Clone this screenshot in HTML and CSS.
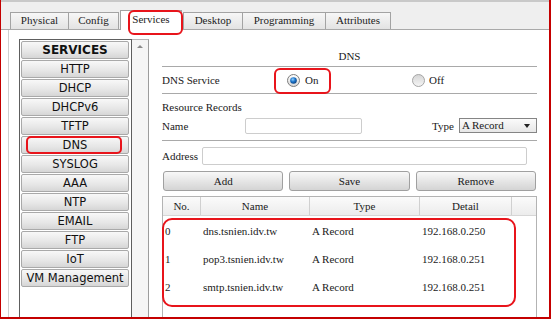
FILE: index.html
```html
<!DOCTYPE html>
<html>
<head>
    <title>DNS Services</title>
    <link rel="stylesheet" href="styles.css">
</head>
<body>
    <div class="window">
        <div class="topline"></div>
        <div class="tabs">
            <div class="tab tab-physical">Physical</div>
            <div class="tab tab-config">Config</div>
            <div class="tab tab-services active">Services</div>
            <div class="tab tab-desktop">Desktop</div>
            <div class="tab tab-programming">Programming</div>
            <div class="tab tab-attributes">Attributes</div>
        </div>

        <div class="main">
            <div class="sidebar">
                <div class="list">
                    <div class="svc head">SERVICES</div>
                    <div class="svc">HTTP</div>
                    <div class="svc">DHCP</div>
                    <div class="svc">DHCPv6</div>
                    <div class="svc">TFTP</div>
                    <div class="svc">DNS</div>
                    <div class="svc">SYSLOG</div>
                    <div class="svc">AAA</div>
                    <div class="svc">NTP</div>
                    <div class="svc">EMAIL</div>
                    <div class="svc">FTP</div>
                    <div class="svc">IoT</div>
                    <div class="svc">VM Management</div>
                </div>
                <div class="scroll"><span class="arrow-up"></span></div>
            </div>

            <div class="content">
                <div class="title">DNS</div>

                <div class="service-row">
                    <span class="label">DNS Service</span>
                    <span class="radio-opt">
                        <svg class="radio" width="13" height="13" viewBox="0 0 13 13">
                            <defs>
                                <linearGradient id="ring" x1="0" y1="0" x2="0" y2="1">
                                    <stop offset="0" stop-color="#ffffff"/>
                                    <stop offset="1" stop-color="#d8d8d8"/>
                                </linearGradient>
                                <radialGradient id="dot" cx="0.4" cy="0.35" r="0.7">
                                    <stop offset="0" stop-color="#8fd0ff"/>
                                    <stop offset="0.5" stop-color="#1b73c9"/>
                                    <stop offset="1" stop-color="#0b3f7c"/>
                                </radialGradient>
                            </defs>
                            <circle cx="6.5" cy="6.5" r="6" fill="url(#ring)" stroke="#7d7d7d"/>
                            <circle cx="6.5" cy="6.5" r="3.3" fill="url(#dot)"/>
                        </svg>
                        On
                    </span>
                    <span class="radio-opt off">
                        <svg class="radio" width="13" height="13" viewBox="0 0 13 13">
                            <defs>
                                <linearGradient id="ringoff" x1="0" y1="0" x2="0" y2="1">
                                    <stop offset="0" stop-color="#d4d4d4"/>
                                    <stop offset="1" stop-color="#f6f6f6"/>
                                </linearGradient>
                            </defs>
                            <circle cx="6.5" cy="6.5" r="6" fill="url(#ringoff)" stroke="#a5a5a5"/>
                        </svg>
                        Off
                    </span>
                </div>

                <div class="records-label">Resource Records</div>

                <div class="name-row">
                    <span class="label name-label">Name</span>
                    <div class="input name-input"></div>
                    <span class="type-label">Type</span>
                    <div class="select">A Record<span class="caret"></span></div>
                </div>

                <div class="address-row">
                    <span class="address-label">Address</span>
                    <div class="input address-input"></div>
                </div>

                <div class="actions">
                    <div class="btn">Add</div>
                    <div class="btn">Save</div>
                    <div class="btn">Remove</div>
                </div>

                <div class="table">
                    <div class="thead">
                        <div class="th">No.</div>
                        <div class="th">Name</div>
                        <div class="th">Type</div>
                        <div class="th">Detail</div>
                        <div class="th last"></div>
                    </div>
                    <div class="trow">
                        <div class="td">0</div>
                        <div class="td">dns.tsnien.idv.tw</div>
                        <div class="td">A Record</div>
                        <div class="td">192.168.0.250</div>
                    </div>
                    <div class="trow">
                        <div class="td">1</div>
                        <div class="td">pop3.tsnien.idv.tw</div>
                        <div class="td">A Record</div>
                        <div class="td">192.168.0.251</div>
                    </div>
                    <div class="trow">
                        <div class="td">2</div>
                        <div class="td">smtp.tsnien.idv.tw</div>
                        <div class="td">A Record</div>
                        <div class="td">192.168.0.251</div>
                    </div>
                </div>
            </div>
        </div>

        <!-- red markers drawn over the dialog -->
        <div class="mark mark-tab"></div>
        <div class="mark mark-dns"></div>
        <div class="mark mark-on"></div>
        <div class="mark mark-rows"></div>
    </div>
</body>
</html>
```

FILE: styles.css
```css
* {
    box-sizing: border-box;
}
body {
    margin: 0;
    background: #ffffff;
    font-family: 'Liberation Serif', 'Times New Roman', serif;
    font-size: 11px;
    color: #1a1a1a;
}
.window {
    position: relative;
    width: 551px;
    height: 319px;
    border-left: 1px solid #c40000;
    border-right: 2px solid #c40000;
    border-bottom: 2px solid #c40000;
    background: #ffffff;
    display: flex;
    flex-direction: column;
    overflow: hidden;
}
.topline {
    height: 2px;
    background: #c9c9c9;
}

/* tabs */
.tabs {
    height: 28px;
    display: flex;
    align-items: flex-end;
    padding-left: 9px;
    background: #efefef;
    border-bottom: 1px solid #a9a9a9;
}
.tab {
    height: 17px;
    line-height: 15px;
    text-align: center;
    border: 1px solid #a3a3a3;
    border-bottom: none;
    margin-right: -1px;
    background: linear-gradient(#f7f7f7, #e3e3e3);
    color: #222;
}
.tab-physical { width: 59px; }
.tab-config { width: 51px; }
.tab-services { width: 62px; margin-left: 2px; }
.tab-desktop { width: 60px; }
.tab-programming { width: 84px; }
.tab-attributes { width: 66px; }
.tab.active {
    height: 20px;
    line-height: 17px;
    margin-bottom: -1px;
    margin-right: 1px;
    background: #ffffff;
    position: relative;
}

/* main panel */
.main {
    flex: 1;
    display: flex;
    margin-left: 7px;
    border-left: 1px solid #cfcfcf;
    padding: 9px 0 0 10px;
    min-height: 0;
}
.sidebar {
    width: 130px;
    display: flex;
}
.list {
    width: 113px;
    border: 1px solid #5e5e5e;
    border-bottom: none;
    padding: 1px 2px 0 1px;
    background: #ffffff;
}
.svc {
    height: 18px;
    margin-bottom: 1px;
    border: 1px solid #a9a9a9;
    border-radius: 2px;
    background: linear-gradient(#f8f8f8, #e6e6e6 60%, #d6d6d6);
    font-family: 'DejaVu Sans', Verdana, sans-serif;
    font-size: 11.5px;
    line-height: 16px;
    text-align: center;
    color: #111;
}
.svc.head {
    font-weight: bold;
    font-size: 12px;
}
.scroll {
    flex: 1;
    border-top: 1px solid #b5b5b5;
    border-right: 1px solid #9c9c9c;
    background: #f5f5f5;
    display: flex;
    justify-content: center;
    padding-top: 5px;
}
.arrow-up {
    width: 0;
    height: 0;
    border-left: 3px solid transparent;
    border-right: 3px solid transparent;
    border-bottom: 3px solid #8a8a8a;
}

/* right side */
.content {
    width: 375px;
    margin-left: 13px;
    margin-top: 8px;
    display: flex;
    flex-direction: column;
}
.title {
    height: 20px;
    line-height: 19px;
    text-align: center;
    border-bottom: 1px solid #a9a9a9;
}
.service-row {
    height: 27px;
    display: flex;
    align-items: center;
    border-bottom: 1px solid #a9a9a9;
}
.label {
    width: 126px;
}
.radio-opt {
    display: flex;
    align-items: center;
    gap: 5px;
    width: 126px;
}
.radio-opt.off {
    gap: 4px;
}
.records-label {
    height: 21px;
    line-height: 16px;
    padding-top: 5px;
}
.name-row {
    height: 26px;
    display: flex;
    align-items: center;
    padding-bottom: 4px;
    border-bottom: 1px solid #a9a9a9;
}
.name-label {
    width: 85px;
}
.input {
    border: 1px solid #cdcdcd;
    border-radius: 2px;
    background: #ffffff;
}
.name-input {
    width: 120px;
    height: 16px;
}
.type-label {
    margin-left: 70px;
}
.select {
    margin-left: 5px;
    width: 80px;
    height: 15px;
    line-height: 13px;
    padding-left: 2px;
    border: 1px solid #858585;
    background: linear-gradient(#fbfbfb, #e7e7e7);
    position: relative;
}
.caret {
    position: absolute;
    right: 6px;
    top: 5px;
    border-left: 3px solid transparent;
    border-right: 3px solid transparent;
    border-top: 4px solid #222;
}
.address-row {
    display: flex;
    align-items: center;
    padding-top: 6px;
}
.address-label {
    width: 40px;
}
.address-input {
    width: 325px;
    height: 18px;
}
.actions {
    display: grid;
    grid-template-columns: repeat(3, 1fr);
    gap: 6px;
    padding: 0 1px;
    margin-top: 6px;
}
.btn {
    height: 20px;
    line-height: 18px;
    text-align: center;
    border: 1px solid #a0a0a0;
    border-radius: 3px;
    background: linear-gradient(#f8f8f8, #e4e4e4 55%, #d4d4d4);
}

/* records table */
.table {
    flex: 1;
    margin-top: 5px;
    border: 1px solid #b3b3b3;
    border-bottom: none;
}
.thead,
.trow {
    display: grid;
    grid-template-columns: 38px 109px 110px 92px 1fr;
}
.thead {
    height: 19px;
    border-bottom: 1px solid #d6d6d6;
}
.th {
    line-height: 18px;
    text-align: center;
    border-right: 1px solid #d0d0d0;
    background: linear-gradient(#fbfbfb, #ececec);
}
.th.last {
    border-right: none;
}
.trow {
    height: 28px;
    align-items: center;
}
.thead + .trow {
    margin-top: 1px;
}
.td {
    padding-left: 2px;
    white-space: nowrap;
}

/* annotation markers */
.mark {
    position: absolute;
    border: 2px solid #e8141b;
}
.mark-tab {
    left: 127px;
    top: 10px;
    width: 55px;
    height: 25px;
    border-radius: 6px;
}
.mark-dns {
    left: 25px;
    top: 136px;
    width: 96px;
    height: 18px;
    border-radius: 5px;
}
.mark-on {
    left: 273px;
    top: 68px;
    width: 57px;
    height: 26px;
    border-radius: 6px;
}
.mark-rows {
    left: 161px;
    top: 218px;
    width: 354px;
    height: 89px;
    border-radius: 10px;
}
```
